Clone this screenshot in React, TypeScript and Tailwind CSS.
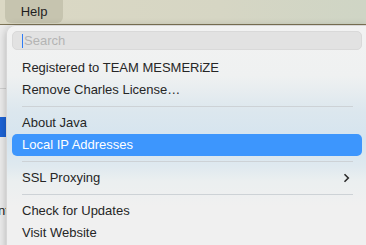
export default function App() {
  const font = { fontFamily: '"Liberation Sans", Arial, sans-serif' }

  return (
    <div
      className="relative w-[366px] h-[245px] overflow-hidden bg-[#ececec] text-[13px] text-[#262626]"
      style={font}
    >
      {/* menu bar */}
      <div className="h-[25px] flex items-start border-b border-[#7d7456] bg-[linear-gradient(90deg,#dbd8c4,#d6d6c4_60%,#cfd5c5)]">
        <div className="ml-[5px] w-[58px] h-[23px] rounded-[6px] rounded-t-none bg-[#c6c4af] flex items-center justify-center text-[#1e1e1e]">
          Help
        </div>
      </div>

      {/* window behind the menu */}
      <div className="flex flex-col">
        <div className="h-[63px]" />
        <div className="h-px bg-[#d0d0d0]" />
        <div className="h-[28px]" />
        <div className="h-[20px] w-[8px] bg-[#1d63d6]" />
        <div className="h-[64px]" />
        <div className="pl-0 -ml-[2px] text-[#222]">nt</div>
      </div>

      {/* dropdown */}
      <div className="absolute left-[6px] top-[25px] w-[360px] h-[230px] rounded-tl-[9px] border-l border-t border-[#d6d6d6] shadow-[0_2px_8px_rgba(0,0,0,0.25)] bg-[linear-gradient(180deg,#f2f2f2_0px,#eff1f1_50px,#dce7ee_85px,#d5e4ef_115px,#dfe9ef_140px,#ebeff0_155px,#f0f0f0_180px)] px-[5px] pt-[5px]">
        <div className="h-[19px] w-[350px] rounded-[5px] bg-[#e2e2e2] border border-[#d9d9d9] flex items-center pl-[9px]">
          <span className="w-px h-[14px] bg-[#2f7cf6] mr-px" />
          <span className="text-[#b4b4b4]">Search</span>
        </div>
        <div className="mt-[7px] w-[350px]">
          <Item label="Registered to TEAM MESMERiZE" />
          <Item label="Remove Charles License…" />
          <Sep />
          <Item label="About Java" />
          <Item label="Local IP Addresses" active />
          <Sep />
          <Item label="SSL Proxying" submenu />
          <Sep />
          <Item label="Check for Updates" />
          <Item label="Visit Website" />
        </div>
      </div>
    </div>
  )
}

function Item({ label, active, submenu }: { label: string; active?: boolean; submenu?: boolean }) {
  return (
    <div
      className={
        active
          ? 'h-[22px] rounded-[5px] bg-[#3d96fd] text-white flex items-center pl-[10px] pr-[12px]'
          : 'h-[22px] flex items-center pl-[10px] pr-[12px]'
      }
    >
      <span className="flex-1">{label}</span>
      {submenu && (
        <svg width="7" height="10" viewBox="0 0 7 10" className="mr-[0px]">
          <path d="M1.5 1.2 L5.3 5 L1.5 8.8" fill="none" stroke="#2a2a2a" strokeWidth="1.6" />
        </svg>
      )}
    </div>
  )
}

function Sep() {
  return (
    <div className="h-[11px] flex items-center pl-[10px] pr-[9px]">
      <div className="h-px w-full bg-[#cdd2d6]" />
    </div>
  )
}
